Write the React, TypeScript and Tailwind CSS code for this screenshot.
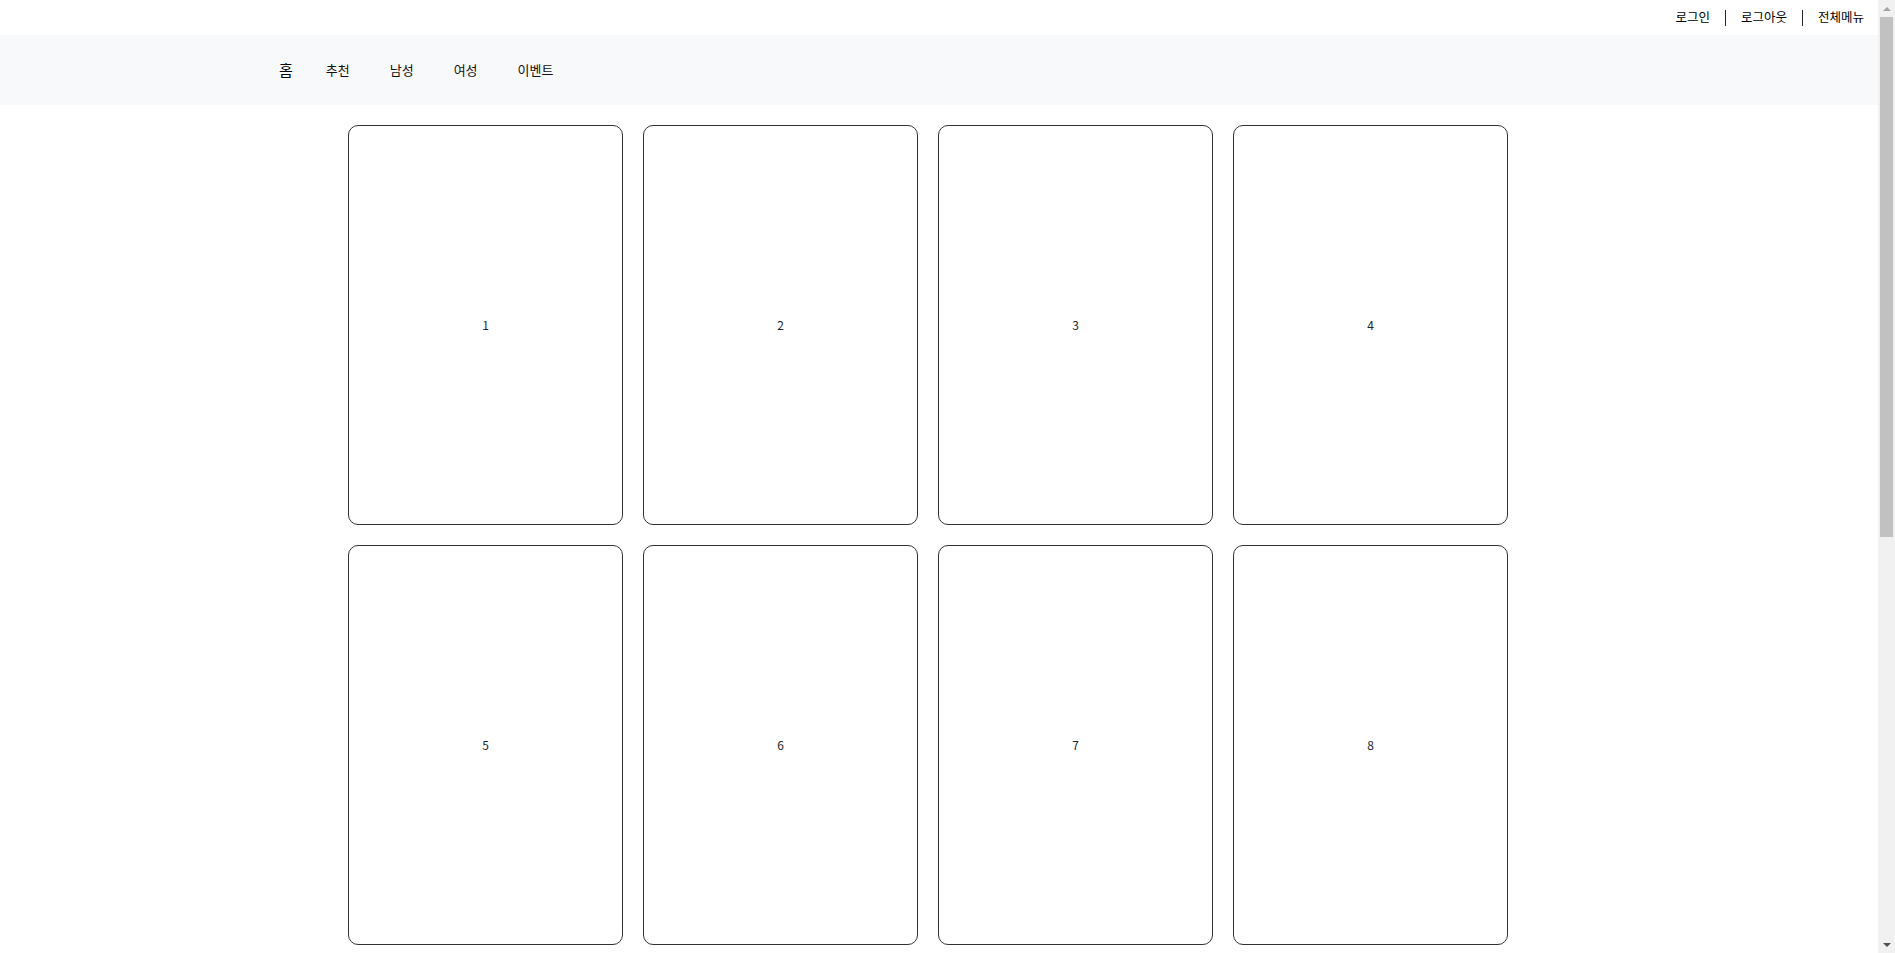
import React from 'react';

const topLinks = ['로그인', '로그아웃', '전체메뉴'];
const navLinks = ['추천', '남성', '여성', '이벤트'];
const cards = [1, 2, 3, 4, 5, 6, 7, 8, 9, 10, 11, 12];

const App = () => {
    return (
        <div className="min-h-[1684px] bg-white pr-[17px] text-[#212529] font-['Noto_Sans_CJK_KR',sans-serif]">
            {/* top utility bar */}
            <div className="h-[35px] flex items-center justify-end pr-[14px] text-[12.5px]">
                {topLinks.map((link, i) => (
                    <div key={link} className="flex items-center">
                        {i > 0 && <span className="w-px h-[16px] bg-[#212529] mx-[15px]" />}
                        <a href="#" className="text-black">{link}</a>
                    </div>
                ))}
            </div>

            {/* main nav */}
            <nav className="h-[70px] bg-[#f8f9fa]">
                <div className="w-[1320px] mx-auto h-full flex items-center">
                    <a href="#" className="text-[15px] text-black mr-[27px]">홈</a>
                    {navLinks.map((link) => (
                        <a key={link} href="#" className="text-[13px] text-[#111] px-[6px] mr-[28px]">{link}</a>
                    ))}
                </div>
            </nav>

            {/* card grid */}
            <main className="pt-[20px] pb-[120px]">
                <div className="w-[1160px] ml-[348px] grid grid-cols-4 gap-[20px]">
                    {cards.map((n) => (
                        <div
                            key={n}
                            className="h-[400px] border border-[#333] rounded-[10px] flex items-center justify-center text-[12px]"
                        >
                            {n}
                        </div>
                    ))}
                </div>
            </main>

            {/* browser scrollbar */}
            <div className="fixed top-0 right-0 w-[17px] h-screen bg-[#f1f1f1] flex flex-col items-center">
                <div className="h-[17px] flex items-center justify-center">
                    <span className="w-0 h-0 border-x-[4px] border-x-transparent border-b-[4px] border-b-[#a3a3a3]" />
                </div>
                <div className="w-[13px] h-[520px] bg-[#c1c1c1]" />
                <div className="flex-1" />
                <div className="h-[17px] flex items-center justify-center">
                    <span className="w-0 h-0 border-x-[4px] border-x-transparent border-t-[4px] border-t-[#505050]" />
                </div>
            </div>
        </div>
    );
};

export default App;
